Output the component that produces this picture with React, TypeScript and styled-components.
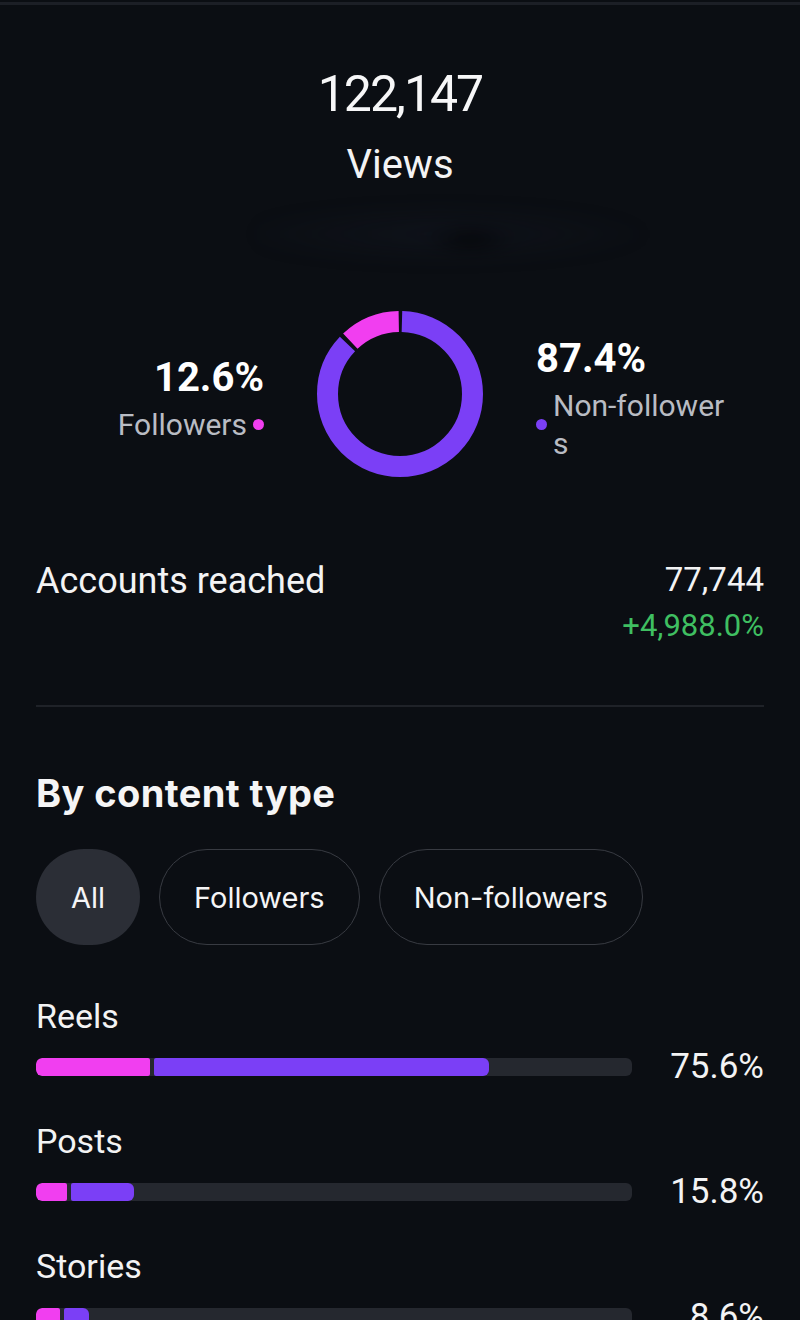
import React from 'react';
import styled, { createGlobalStyle } from 'styled-components';

const PINK = '#f13ef0';
const PURPLE = '#7b3ff6';

const GlobalStyle = createGlobalStyle`
  html, body {
    margin: 0;
    padding: 0;
    background: #0b0e13;
  }
  body {
    font-family: Roboto, "Liberation Sans", sans-serif;
    color: #f3f4f6;
  }
`;

const Screen = styled.div`
  min-height: 100vh;
  background: #0b0e13;
`;

const TopLine = styled.div`
  height: 3px;
  margin-top: 2px;
  background: #1c1f26;
`;

const Content = styled.main`
  display: flex;
  flex-direction: column;
  padding: 0 36px 60px;
`;

const Summary = styled.section`
  display: flex;
  flex-direction: column;
  align-items: center;
  padding-top: 64px;
`;

const TotalNumber = styled.div`
  font-size: 50px;
  line-height: 1;
  letter-spacing: -2px;
  color: #f7f7f8;
`;

const TotalLabel = styled.div`
  margin-top: 26px;
  font-size: 40px;
  line-height: 1;
  color: #f3f3f4;
`;

/* the blurred-out caption under "Views" */
const Redacted = styled.div`
  margin-top: 5px;
  margin-left: 124px;
  width: 410px;
  height: 80px;
  filter: blur(8px);
  background:
    radial-gradient(ellipse 46px 14px at 52% 62%, rgba(2, 3, 5, 0.8), transparent),
    radial-gradient(ellipse 210px 30px at 45% 55%, rgba(30, 36, 56, 0.2), transparent);
`;

const AudienceSplit = styled.section`
  margin-top: 41px;
  display: grid;
  grid-template-columns: 1fr 166px 1fr;
  column-gap: 53px;
  align-items: center;
`;

const SplitSide = styled.div<{ $side: 'left' | 'right' }>`
  display: flex;
  flex-direction: column;
  align-items: ${(p) => (p.$side === 'left' ? 'flex-end' : 'flex-start')};
  margin-top: 13px;
`;

const SplitPct = styled.div`
  font-size: 40px;
  font-weight: 700;
  line-height: 1;
  color: #ffffff;
`;

const Legend = styled.div`
  margin-top: 8px;
  display: flex;
  align-items: center;
  gap: 6px;
`;

const LegendText = styled.div`
  font-size: 30px;
  line-height: 38px;
  color: #b9bcc3;
`;

const Dot = styled.span<{ $color: string }>`
  width: 11px;
  height: 11px;
  border-radius: 50%;
  flex-shrink: 0;
  background: ${(p) => p.$color};
`;

const MetricRow = styled.section`
  margin-top: 86px;
  display: flex;
  justify-content: space-between;
  align-items: flex-start;
`;

const MetricLabel = styled.div`
  font-size: 36px;
  line-height: 1;
  color: #f3f3f4;
`;

const MetricValues = styled.div`
  display: flex;
  flex-direction: column;
  align-items: flex-end;
`;

const MetricValue = styled.div`
  font-size: 33px;
  line-height: 1;
  color: #f3f3f4;
`;

const MetricChange = styled.div`
  margin-top: 14px;
  font-size: 31px;
  line-height: 1;
  color: #3fbf61;
`;

const Divider = styled.hr`
  margin: 64px 0 0;
  border: none;
  height: 2px;
  background: #1f2228;
`;

const SectionTitle = styled.h2`
  margin: 67px 0 0;
  font-family: Inter, Roboto, sans-serif;
  font-size: 38px;
  font-weight: 700;
  line-height: 1;
  letter-spacing: 0.4px;
  color: #f5f5f6;
`;

const Chips = styled.div`
  margin-top: 37px;
  display: flex;
  gap: 19px;
`;

const Chip = styled.button<{ $active?: boolean }>`
  height: 96px;
  padding: 0 34px;
  border-radius: 48px;
  border: 1.5px solid ${(p) => (p.$active ? 'transparent' : '#383b42')};
  background: ${(p) => (p.$active ? '#2b2e36' : 'transparent')};
  color: #f5f5f6;
  font-family: Inter, Roboto, sans-serif;
  font-size: 29px;
  line-height: 1;
`;

const Breakdown = styled.section`
  margin-top: 54px;
  display: flex;
  flex-direction: column;
  gap: 40px;
`;

const TypeBlock = styled.div`
  display: flex;
  flex-direction: column;
  gap: 16px;
`;

const TypeLabel = styled.div`
  font-size: 34px;
  line-height: 1;
  color: #f3f3f4;
`;

const BarRow = styled.div`
  display: flex;
  align-items: center;
`;

const Track = styled.div`
  flex: 1;
  height: 18px;
  border-radius: 6px;
  background: #25282f;
  display: flex;
  overflow: hidden;
`;

const Segment = styled.div<{ $color: string; $first?: boolean }>`
  height: 100%;
  background: ${(p) => p.$color};
  border-radius: ${(p) => (p.$first ? '6px 2px 2px 6px' : '2px 6px 6px 2px')};
  margin-left: ${(p) => (p.$first ? '0' : '4px')};
`;

const TypePct = styled.div`
  width: 132px;
  text-align: right;
  font-size: 35px;
  line-height: 1;
  color: #f3f3f4;
`;

function Donut({ share }: { share: number }) {
  const r = 72.5;
  const c = 2 * Math.PI * r;
  const gap = 4;
  const purple = (1 - share) * c;
  const pink = share * c;
  return (
    <svg width="166" height="166" viewBox="0 0 166 166">
      <g transform="rotate(-90 83 83)" fill="none" strokeWidth="21">
        <circle
          cx="83" cy="83" r={r}
          stroke={PURPLE}
          strokeDasharray={`${purple - gap} ${c}`}
          strokeDashoffset={-gap / 2}
        />
        <circle
          cx="83" cy="83" r={r}
          stroke={PINK}
          strokeDasharray={`${pink - gap} ${c}`}
          strokeDashoffset={-(purple + gap / 2)}
        />
      </g>
    </svg>
  );
}

const contentTypes = [
  { name: 'Reels', pct: '75.6%', followers: 19.2, other: 56.2 },
  { name: 'Posts', pct: '15.8%', followers: 5.2, other: 10.6 },
  { name: 'Stories', pct: '8.6%', followers: 4.0, other: 4.3 },
];

export default function App() {
  return (
    <Screen>
      <GlobalStyle />
      <TopLine />
      <Content>
        <Summary>
          <TotalNumber>122,147</TotalNumber>
          <TotalLabel>Views</TotalLabel>
          <Redacted />
        </Summary>

        <AudienceSplit>
          <SplitSide $side="left">
            <SplitPct>12.6%</SplitPct>
            <Legend>
              <LegendText>Followers</LegendText>
              <Dot $color={PINK} />
            </Legend>
          </SplitSide>
          <Donut share={0.126} />
          <SplitSide $side="right">
            <SplitPct>87.4%</SplitPct>
            <Legend>
              <Dot $color={PURPLE} />
              <LegendText>
                Non-follower
                <br />s
              </LegendText>
            </Legend>
          </SplitSide>
        </AudienceSplit>

        <MetricRow>
          <MetricLabel>Accounts reached</MetricLabel>
          <MetricValues>
            <MetricValue>77,744</MetricValue>
            <MetricChange>+4,988.0%</MetricChange>
          </MetricValues>
        </MetricRow>

        <Divider />

        <SectionTitle>By content type</SectionTitle>
        <Chips>
          <Chip $active>All</Chip>
          <Chip>Followers</Chip>
          <Chip>Non-followers</Chip>
        </Chips>

        <Breakdown>
          {contentTypes.map((t) => (
            <TypeBlock key={t.name}>
              <TypeLabel>{t.name}</TypeLabel>
              <BarRow>
                <Track>
                  <Segment $first $color={PINK} style={{ width: `${t.followers}%` }} />
                  <Segment $color={PURPLE} style={{ width: `${t.other}%` }} />
                </Track>
                <TypePct>{t.pct}</TypePct>
              </BarRow>
            </TypeBlock>
          ))}
        </Breakdown>
      </Content>
    </Screen>
  );
}
